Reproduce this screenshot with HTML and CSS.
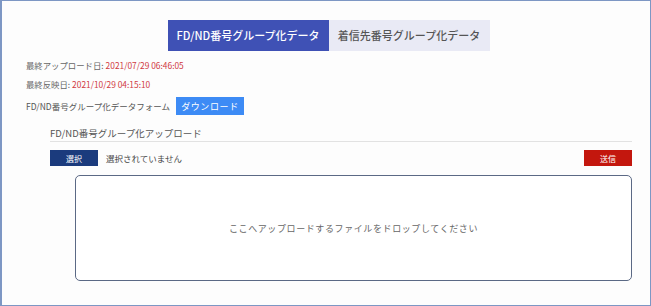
FILE: index.html
```html
<!DOCTYPE html>
<html lang="ja">
<head>
    <meta charset="UTF-8">
    <meta name="viewport" content="width=device-width, initial-scale=1.0">
    <title>FD/ND番号グループ化データ</title>
    <link rel="stylesheet" href="styles.css">
</head>
<body>
<div class="frame">
    <div class="tabs">
        <div class="tab active">FD/ND番号グループ化データ</div>
        <div class="tab">着信先番号グループ化データ</div>
    </div>

    <div class="info">
        <p class="info-line">最終アップロード日: <span class="stamp">2021/07/29 06:46:05</span></p>
        <p class="info-line">最終反映日: <span class="stamp">2021/10/29 04:15:10</span></p>
        <div class="form-row">
            <span>FD/ND番号グループ化データフォーム</span>
            <button class="btn-download">ダウンロード</button>
        </div>
    </div>

    <div class="upload">
        <h3 class="upload-title">FD/ND番号グループ化アップロード</h3>
        <div class="file-row">
            <button class="btn-select">選択</button>
            <span class="file-name">選択されていません</span>
            <button class="btn-send">送信</button>
        </div>
        <div class="dropzone">ここへアップロードするファイルをドロップしてください</div>
    </div>
</div>
</body>
</html>
```

FILE: styles.css
```css
* { box-sizing: border-box; }
body { margin: 0; font-family: "Noto Sans CJK JP", "Noto Sans", sans-serif; color: #555; background: #fff; }
.frame {
    width: 651px; height: 306px; background: #fdfdfd;
    border: 1px solid #7d97c4; border-left: 2px solid #7d97c4;
    display: flex; flex-direction: column;
}

/* tabs */
.tabs { display: flex; justify-content: center; margin-top: 19px; padding-left: 5px; }
.tab {
    height: 31px; line-height: 31px; width: 161px; text-align: center;
    font-size: 11px; font-weight: 500; color: #555; background: #e9eaf5;
}
.tab.active { background: #3f51b5; color: #fff; width: 161px; }

/* info lines */
.info { padding-left: 24px; margin-top: 8px; }
.info-line { margin: 0 0 7px; font-size: 8.4px; line-height: 12px; color: #666; }
.stamp { color: #d0393f; }
.form-row { display: flex; align-items: center; gap: 6px; margin-top: 7px; font-size: 8.5px; color: #555; }
.btn-download {
    height: 18px; width: 68px; padding: 0; border: none; background: #3d8bf5; color: #fff;
    font-family: inherit; font-size: 9px; letter-spacing: 0.6px;
}

/* upload */
.upload { padding: 0 18px 0 48px; margin-top: 11px; }
.upload-title {
    margin: 0; font-size: 9.5px; line-height: 14px; font-weight: 400; color: #555;
    padding-bottom: 1px; border-bottom: 1px solid #e2e2e2;
}
.file-row { display: flex; align-items: center; margin-top: 8px; }
.btn-select, .btn-send {
    height: 16px; width: 48px; padding: 0; border: none; color: #fff;
    font-family: inherit; font-size: 8px;
}
.btn-select { background: #1b3b7d; }
.btn-send { background: #c3170e; margin-left: auto; }
.file-name { margin-left: 8px; font-size: 8.5px; color: #444; }
.dropzone {
    margin: 9px 0 0 25px; height: 106px;
    border: 1.5px solid #5b6985; border-radius: 5px; background: #fff;
    display: flex; align-items: center; justify-content: center;
    font-size: 9px; letter-spacing: 0.6px; color: #666;
}
```
